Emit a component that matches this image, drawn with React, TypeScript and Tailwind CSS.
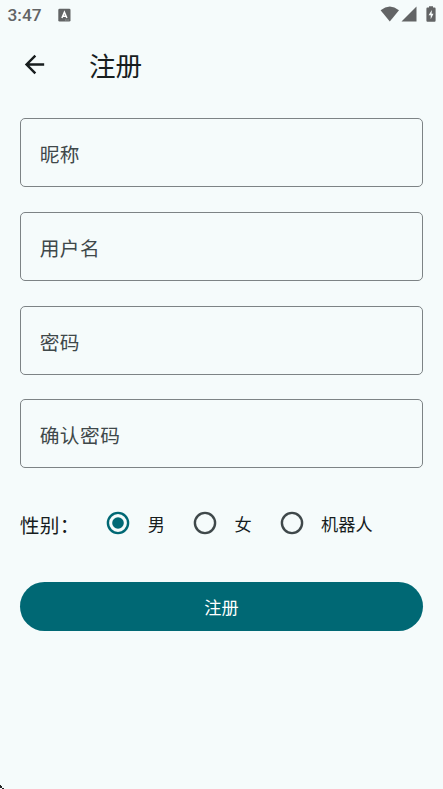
import { useState } from 'react'
import clsx from 'clsx'

const FIELDS = ['昵称', '用户名', '密码', '确认密码']
const GENDERS = ['男', '女', '机器人']

function StatusBar() {
  return (
    <header className="flex h-[30px] items-center pl-[7.5px] pr-[7.5px] text-[#626465]">
      <span className="w-[34px] font-['Roboto',sans-serif] text-[17.3px] font-medium leading-[30px]">3:47</span>
      {/* keyboard badge */}
      <svg viewBox="0 0 13 14" className="ml-[16.5px] h-[14px] w-[13px]">
        <rect x="0.3" y="0.7" width="12.2" height="12.8" rx="1.3" fill="currentColor" />
        <path d="M3.9 10 6.4 4.1 8.9 10M4.8 8.2H8" fill="none" stroke="#fff" strokeWidth="1.5" />
        <path d="M7.2 12h3.4" stroke="#b9bdbe" strokeWidth="0.8" strokeDasharray="0.9 0.5" />
      </svg>
      <div className="ml-auto flex items-center pb-[1.5px]">
        <svg viewBox="0 0 20 16" className="h-[16px] w-[20px]">
          <path d="M0.6 4.2Q9.8 -3 19 4.2L9.8 15.6Z" fill="currentColor" />
        </svg>
        <svg viewBox="0 0 16 16" className="ml-px h-[16px] w-[16px]">
          <path d="M0.5 15.5 15.5 0.5V15.5Z" fill="currentColor" />
        </svg>
        <svg viewBox="0 0 10 16" className="ml-[9px] h-[16px] w-[10px]">
          <path d="M3 0.3H7V1.6H8.6Q9.6 1.6 9.6 2.7V14.5Q9.6 15.7 8.6 15.7H1.4Q0.4 15.7 0.4 14.5V2.7Q0.4 1.6 1.4 1.6H3Z" fill="currentColor" />
          <path d="M5.8 4 2.6 9.2H4.7V13.2L7.5 7.8H5.6Z" fill="#f5fbfb" />
        </svg>
      </div>
    </header>
  )
}

function TextField({ label }: { label: string }) {
  return (
    <div className="flex h-[69px] items-center rounded-[5px] border border-[#7d8385] px-[19px] pt-[3px] text-[19.7px] tracking-[0.5px] text-[#3f484a]">
      {label}
    </div>
  )
}

function Radio({ checked }: { checked: boolean }) {
  return (
    <svg viewBox="0 0 24 24" className={clsx('size-[24px]', checked ? 'text-[#006874]' : 'text-[#3f484a]')}>
      <circle cx="12" cy="12" r="10.1" fill="none" stroke="currentColor" strokeWidth="2.4" />
      {checked && <circle cx="12" cy="12" r="5.8" fill="currentColor" />}
    </svg>
  )
}

export default function App() {
  const [gender, setGender] = useState('男')

  return (
    <div className="relative h-[789px] w-[443px] overflow-hidden bg-[#f5fbfb] font-['Noto_Sans_CJK_SC',sans-serif] text-[#171d1e]">
      <StatusBar />

      <div className="flex h-[68px] items-center pl-[19.5px]">
        <svg viewBox="0 0 24 24" className="size-[29px]">
          <path d="M20 11H7.83l5.59-5.59L12 4l-8 8 8 8 1.41-1.41L7.83 13H20v-2z" fill="currentColor" />
        </svg>
        <h1 className="ml-[40.5px] pt-px text-[26.6px] leading-[40px]">注册</h1>
      </div>

      <main className="px-[19.7px] pt-[20.2px]">
        <div className="flex flex-col gap-[24.7px]">
          {FIELDS.map((label) => (
            <TextField key={label} label={label} />
          ))}
        </div>

        <div className="mt-[25.7px] flex h-[59px] items-center">
          <span className="w-[86.5px] pt-[2px] text-[19.7px] tracking-[0.4px]">性别：</span>
          {GENDERS.map((g) => (
            <button key={g} onClick={() => setGender(g)} className="mr-[28px] flex items-center">
              <Radio checked={gender === g} />
              <span className="ml-[17.5px] pt-[2px] text-[17.2px] leading-[24px]">{g}</span>
            </button>
          ))}
        </div>

        <button className="mt-[29.4px] flex h-[49px] w-full items-center justify-center rounded-full bg-[#006874] pt-px text-[17.2px] text-white">
          注册
        </button>
      </main>

      {/* dark sliver of the device frame */}
      <svg viewBox="0 0 4 4" className="absolute bottom-0 left-0 size-[4px]">
        <path d="M0 0H1V1H2V3H4V4H2V3H0Z" fill="#222" />
      </svg>
    </div>
  )
}
